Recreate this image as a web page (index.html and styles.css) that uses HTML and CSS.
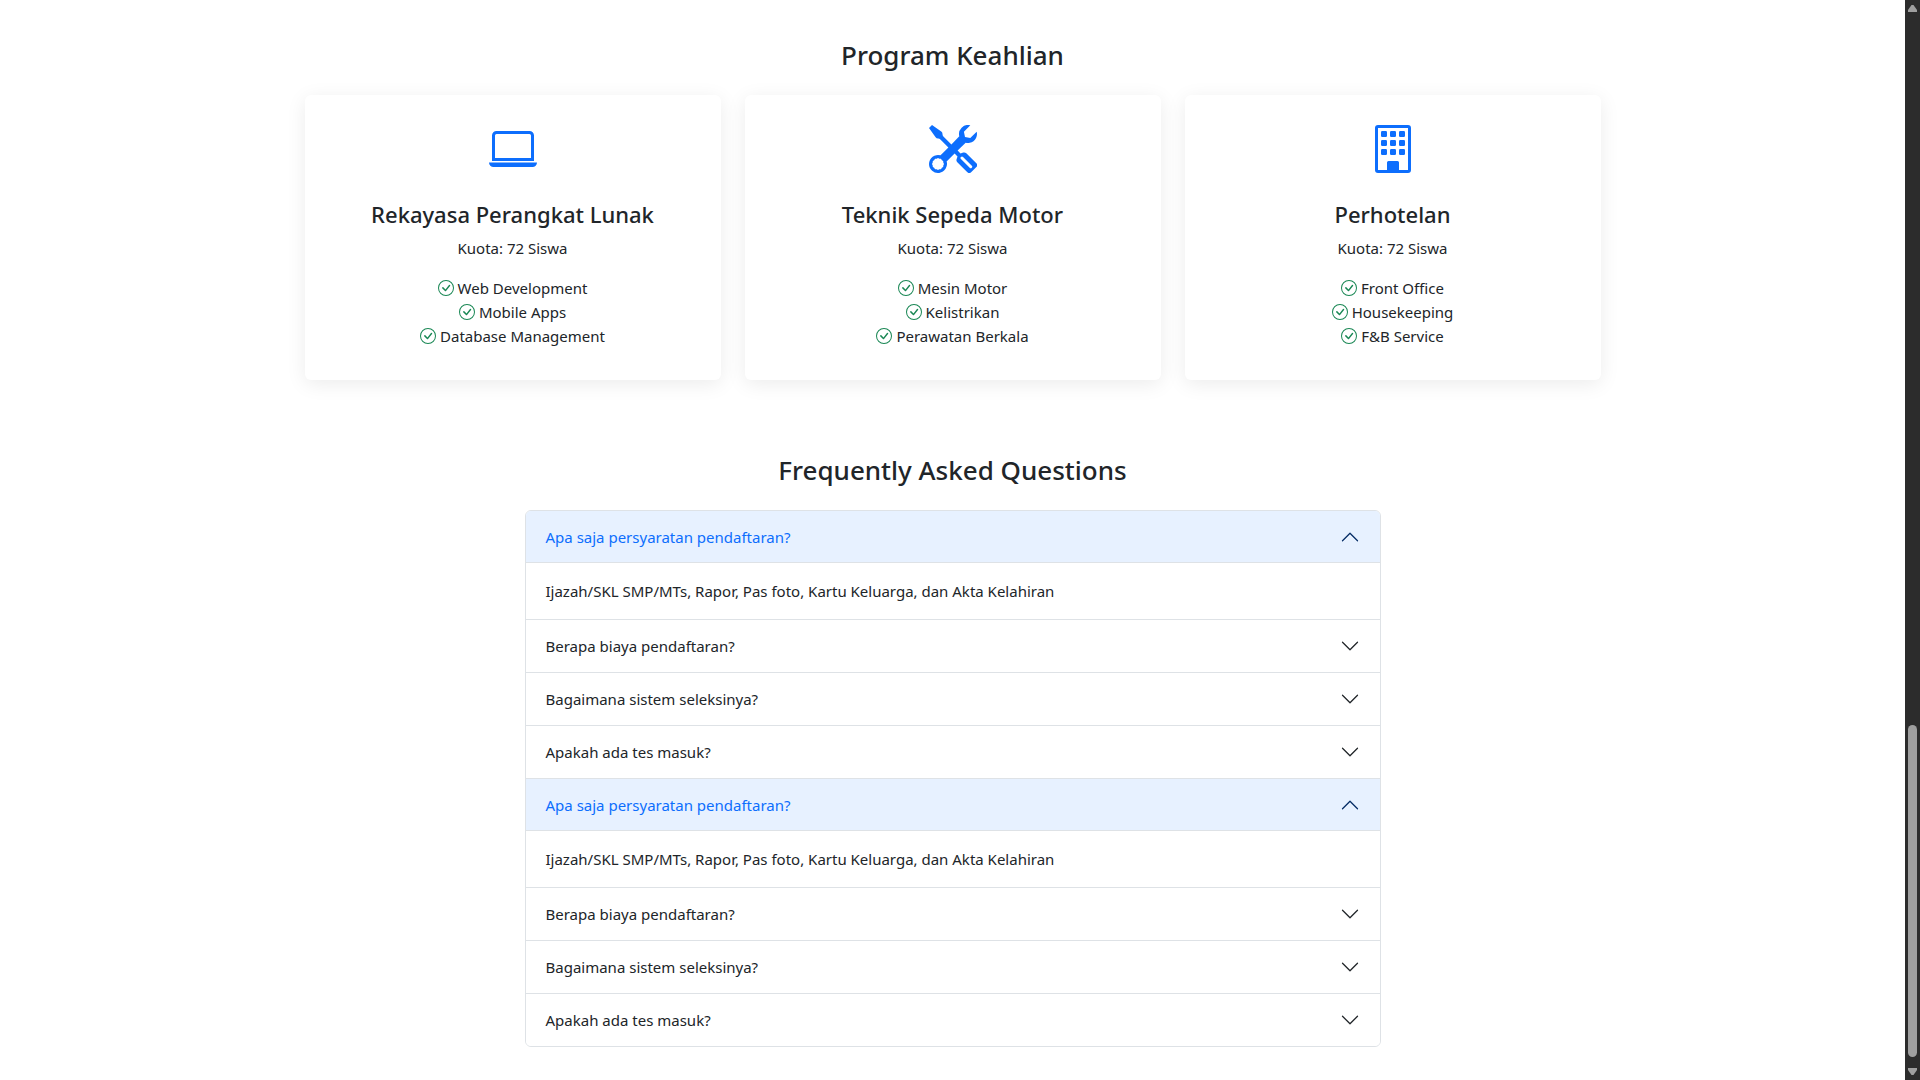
FILE: index.html
```html
<!DOCTYPE html>
<html lang="id">
<head>
<meta charset="utf-8">
<meta name="viewport" content="width=device-width, initial-scale=1">
<title>Program Keahlian</title>
<link rel="stylesheet" href="styles.css">
</head>
<body>
<svg class="sprite" aria-hidden="true">
  <symbol id="check" viewBox="0 0 16 16"><path d="M8 15A7 7 0 1 1 8 1a7 7 0 0 1 0 14m0 1A8 8 0 1 0 8 0a8 8 0 0 0 0 16"/><path d="m10.97 4.97-.02.022-3.473 4.425-2.093-2.094a.75.75 0 0 0-1.06 1.06L6.97 11.03a.75.75 0 0 0 1.079-.02l3.992-4.99a.75.75 0 0 0-1.071-1.05"/></symbol>
  <symbol id="chevron" viewBox="0 0 16 16"><path d="m2 5 6 6 6-6" fill="none" stroke="currentColor" stroke-linecap="round" stroke-linejoin="round"/></symbol>
</svg>
<main class="page">
  <section class="programs">
    <h2 class="section-title">Program Keahlian</h2>
    <div class="cards">
      <article class="card">
        <svg class="card-icon" viewBox="0 0 16 16" aria-hidden="true"><path d="M13.5 3a.5.5 0 0 1 .5.5V11H2V3.5a.5.5 0 0 1 .5-.5zm-11-1A1.5 1.5 0 0 0 1 3.5V12h14V3.5A1.5 1.5 0 0 0 13.5 2zM0 12.5h16a1.5 1.5 0 0 1-1.5 1.5h-13A1.5 1.5 0 0 1 0 12.5"/></svg>
        <h3 class="card-title">Rekayasa Perangkat Lunak</h3>
        <p class="card-quota">Kuota: 72 Siswa</p>
        <ul class="features">
          <li><svg class="check"><use href="#check"/></svg>Web Development</li>
          <li><svg class="check"><use href="#check"/></svg>Mobile Apps</li>
          <li><svg class="check"><use href="#check"/></svg>Database Management</li>
        </ul>
      </article>
      <article class="card">
        <svg class="card-icon" viewBox="0 0 16 16" aria-hidden="true"><path d="M1 0 0 1l2.2 3.081a1 1 0 0 0 .815.419h.07a1 1 0 0 1 .708.293l2.675 2.675-2.617 2.654A3.003 3.003 0 0 0 0 13a3 3 0 1 0 5.878-.851l2.654-2.617.968.968-.305.914a1 1 0 0 0 .242 1.023l3.27 3.27a.997.997 0 0 0 1.414 0l1.586-1.586a.997.997 0 0 0 0-1.414l-3.27-3.27a1 1 0 0 0-1.023-.242L10.5 9.5l-.96-.96 2.68-2.643A3.005 3.005 0 0 0 16 3q0-.405-.102-.777l-2.14 2.141L12 4l-.364-1.757L13.777.102a3 3 0 0 0-3.675 3.68L7.462 6.46 4.793 3.793a1 1 0 0 1-.293-.707v-.071a1 1 0 0 0-.419-.814zm9.646 10.646a.5.5 0 0 1 .708 0l2.914 2.915a.5.5 0 0 1-.707.707l-2.915-2.914a.5.5 0 0 1 0-.708M3 11l.471.242.529.026.287.445.445.287.026.529L5 13l-.242.471-.026.529-.445.287-.287.445-.529.026L3 15l-.471-.242L2 14.732l-.287-.445L1.268 14l-.026-.529L1 13l.242-.471.026-.529.445-.287.287-.445.529-.026z"/></svg>
        <h3 class="card-title">Teknik Sepeda Motor</h3>
        <p class="card-quota">Kuota: 72 Siswa</p>
        <ul class="features">
          <li><svg class="check"><use href="#check"/></svg>Mesin Motor</li>
          <li><svg class="check"><use href="#check"/></svg>Kelistrikan</li>
          <li><svg class="check"><use href="#check"/></svg>Perawatan Berkala</li>
        </ul>
      </article>
      <article class="card">
        <svg class="card-icon" viewBox="0 0 16 16" aria-hidden="true"><path d="M2 1a1 1 0 0 1 1-1h10a1 1 0 0 1 1 1v14a1 1 0 0 1-1 1H3a1 1 0 0 1-1-1zm11 0H3v14h3v-2.5a.5.5 0 0 1 .5-.5h3a.5.5 0 0 1 .5.5V15h3z"/><g><rect x="4" y="2" width="2" height="2" rx=".4"/><rect x="7" y="2" width="2" height="2" rx=".4"/><rect x="10" y="2" width="2" height="2" rx=".4"/><rect x="4" y="5" width="2" height="2" rx=".4"/><rect x="7" y="5" width="2" height="2" rx=".4"/><rect x="10" y="5" width="2" height="2" rx=".4"/><rect x="4" y="8" width="2" height="2" rx=".4"/><rect x="7" y="8" width="2" height="2" rx=".4"/><rect x="10" y="8" width="2" height="2" rx=".4"/></g></svg>
        <h3 class="card-title">Perhotelan</h3>
        <p class="card-quota">Kuota: 72 Siswa</p>
        <ul class="features">
          <li><svg class="check"><use href="#check"/></svg>Front Office</li>
          <li><svg class="check"><use href="#check"/></svg>Housekeeping</li>
          <li><svg class="check"><use href="#check"/></svg>F&amp;B Service</li>
        </ul>
      </article>
    </div>
  </section>

  <section class="faq">
    <h2 class="section-title">Frequently Asked Questions</h2>
    <div class="accordion">
      <div class="item">
        <button class="question" type="button" aria-expanded="true">Apa saja persyaratan pendaftaran?<svg class="chevron"><use href="#chevron"/></svg></button>
        <p class="answer">Ijazah/SKL SMP/MTs, Rapor, Pas foto, Kartu Keluarga, dan Akta Kelahiran</p>
      </div>
      <div class="item">
        <button class="question" type="button" aria-expanded="false">Berapa biaya pendaftaran?<svg class="chevron"><use href="#chevron"/></svg></button>
      </div>
      <div class="item">
        <button class="question" type="button" aria-expanded="false">Bagaimana sistem seleksinya?<svg class="chevron"><use href="#chevron"/></svg></button>
      </div>
      <div class="item">
        <button class="question" type="button" aria-expanded="false">Apakah ada tes masuk?<svg class="chevron"><use href="#chevron"/></svg></button>
      </div>
      <div class="item">
        <button class="question" type="button" aria-expanded="true">Apa saja persyaratan pendaftaran?<svg class="chevron"><use href="#chevron"/></svg></button>
        <p class="answer">Ijazah/SKL SMP/MTs, Rapor, Pas foto, Kartu Keluarga, dan Akta Kelahiran</p>
      </div>
      <div class="item">
        <button class="question" type="button" aria-expanded="false">Berapa biaya pendaftaran?<svg class="chevron"><use href="#chevron"/></svg></button>
      </div>
      <div class="item">
        <button class="question" type="button" aria-expanded="false">Bagaimana sistem seleksinya?<svg class="chevron"><use href="#chevron"/></svg></button>
      </div>
      <div class="item">
        <button class="question" type="button" aria-expanded="false">Apakah ada tes masuk?<svg class="chevron"><use href="#chevron"/></svg></button>
      </div>
    </div>
  </section>
</main>
<div class="scrollbar" aria-hidden="true">
  <svg class="arrow" viewBox="0 0 9 7"><path d="M3.5 0h2L9 5v2H0V5z"/></svg>
  <div class="track"><div class="thumb"></div></div>
  <svg class="arrow" viewBox="0 0 9 7"><path d="M3.5 7h2L9 2V0H0v2z"/></svg>
</div>
</body>
</html>
```
FILE: styles.css
```css
* {
  box-sizing: border-box;
}

body {
  margin: 0;
  display: flex;
  align-items: flex-start;
  background: #fff;
  color: #212529;
  font: 15px/24px "Segoe UI", "Noto Sans", sans-serif;
}

h2, h3, p, ul {
  margin: 0;
}

.sprite {
  display: none;
}

svg {
  fill: currentColor;
}

.page {
  flex: 1;
  min-width: 0;
}

.section-title {
  margin-bottom: 23px;
  font-size: 26px;
  font-weight: 500;
  line-height: 34px;
  text-align: center;
}

.programs {
  max-width: 1320px;
  margin: 0 auto;
  padding: 38px 12px 0;
}

.cards {
  display: grid;
  grid-template-columns: repeat(auto-fit, minmax(300px, 1fr));
  gap: 24px;
}

.card {
  display: flex;
  flex-direction: column;
  align-items: center;
  padding: 30px 24px 32px;
  border-radius: 6px;
  background: #fff;
  box-shadow: 0 4px 20px rgba(0, 0, 0, 0.08);
  text-align: center;
}

.card-icon {
  width: 48px;
  height: 48px;
  margin-bottom: 27px;
  color: #0d6efd;
}

.card-title {
  margin-bottom: 8px;
  font-size: 22px;
  font-weight: 500;
  line-height: 28px;
}

.card-quota {
  margin-bottom: 16px;
}

.features {
  padding: 0;
  list-style: none;
}

.features li {
  display: flex;
  align-items: center;
  justify-content: center;
  gap: 4px;
}

.check {
  width: 16px;
  height: 16px;
  color: #198754;
}

.faq {
  max-width: 880px;
  margin: 0 auto;
  padding: 73px 12px 33px;
}

.accordion {
  overflow: hidden;
  border: 1px solid #dee2e6;
  border-radius: 6px;
}

.item + .item {
  border-top: 1px solid #dee2e6;
}

.question {
  display: flex;
  align-items: center;
  justify-content: space-between;
  width: 100%;
  padding: 14px 20px;
  border: 0;
  background: #fff;
  color: inherit;
  font: inherit;
  text-align: left;
  cursor: pointer;
}

.question[aria-expanded="true"] {
  background: #e7f1ff;
  box-shadow: inset 0 -1px 0 #dee2e6;
  color: #0d6efd;
}

.answer {
  padding: 16px 20px;
}

.chevron {
  width: 20px;
  height: 20px;
}

.question[aria-expanded="true"] .chevron {
  color: #052c65;
  transform: rotate(180deg);
}

.scrollbar {
  position: sticky;
  top: 0;
  display: flex;
  flex-direction: column;
  align-items: center;
  gap: 8px;
  width: 15px;
  height: 100vh;
  padding: 5px 0;
  background: #2c2c2c;
  color: #9f9f9f;
}

.arrow {
  width: 9px;
  height: 7px;
}

.track {
  display: flex;
  flex: 1;
  align-items: flex-end;
  padding-bottom: 3px;
}

.thumb {
  width: 9px;
  height: 32%;
  border-radius: 5px;
  background: #9f9f9f;
}
```
